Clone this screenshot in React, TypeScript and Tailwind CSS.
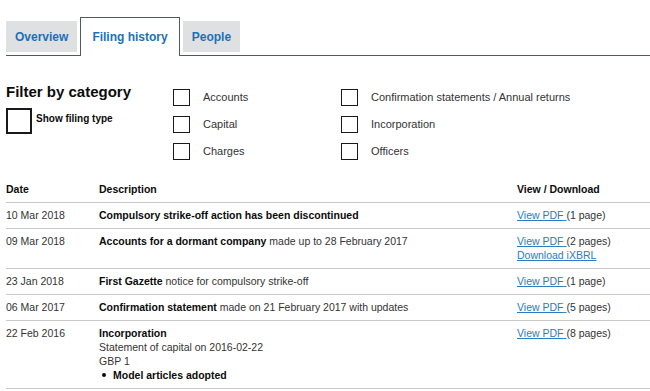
const tabs = [
  { label: 'Overview', active: false },
  { label: 'Filing history', active: true },
  { label: 'People', active: false },
];

const categoriesA = ['Accounts', 'Capital', 'Charges'];
const categoriesB = ['Confirmation statements / Annual returns', 'Incorporation', 'Officers'];

type Filing = {
  date: string;
  title: string;
  rest?: string;
  extra?: string[];
  bullet?: string;
  pages: string;
  ixbrl?: boolean;
};

const filings: Filing[] = [
  { date: '10 Mar 2018', title: 'Compulsory strike-off action has been discontinued', pages: '(1 page)' },
  {
    date: '09 Mar 2018',
    title: 'Accounts for a dormant company',
    rest: ' made up to 28 February 2017',
    pages: '(2 pages)',
    ixbrl: true,
  },
  { date: '23 Jan 2018', title: 'First Gazette', rest: ' notice for compulsory strike-off', pages: '(1 page)' },
  {
    date: '06 Mar 2017',
    title: 'Confirmation statement',
    rest: ' made on 21 February 2017 with updates',
    pages: '(5 pages)',
  },
  {
    date: '22 Feb 2016',
    title: 'Incorporation',
    extra: ['Statement of capital on 2016-02-22', 'GBP 1'],
    bullet: 'Model articles adopted',
    pages: '(8 pages)',
  },
];

function Checkbox({ label }: { label: string }) {
  return (
    <label className="flex items-center gap-[13px]">
      <span className="block h-[17px] w-[17px] shrink-0 border-[1.5px] border-[#1a1a1a] bg-white" />
      <span className="text-[11px] text-[#333]">{label}</span>
    </label>
  );
}

export default function App() {
  return (
    <div className="min-h-[391px] bg-white pl-[6px] pt-[17px] font-['Liberation_Sans',Arial,sans-serif] text-[#0b0c0c]">
      <ul className="flex items-end gap-[3px] border-b border-[#505a5f]">
        {tabs.map((t) =>
          t.active ? (
            <li
              key={t.label}
              className="-mb-px flex h-[39px] items-center border border-b-0 border-[#505a5f] bg-white px-[11px] text-[12px] font-bold text-[#1d70b8]"
            >
              {t.label}
            </li>
          ) : (
            <li
              key={t.label}
              className="mb-[3px] flex h-[31px] items-center bg-[#dee0e2] px-[9px] text-[12px] font-bold text-[#1d70b8]"
            >
              {t.label}
            </li>
          ),
        )}
      </ul>

      <div className="mt-[27px] flex">
        <div className="w-[167px]">
          <h2 className="text-[15px] font-bold leading-[18px]">Filter by category</h2>
          <label className="mt-[7px] flex items-start gap-[4px]">
            <span className="block h-[26px] w-[26px] shrink-0 border-2 border-[#1a1a1a]" />
            <span className="mt-[5px] text-[10px] font-bold leading-[12px]">Show filing type</span>
          </label>
        </div>
        <div className="mt-[6px] flex w-[168px] flex-col gap-[10px]">
          {categoriesA.map((c) => (
            <Checkbox key={c} label={c} />
          ))}
        </div>
        <div className="mt-[6px] flex flex-col gap-[10px]">
          {categoriesB.map((c) => (
            <Checkbox key={c} label={c} />
          ))}
        </div>
      </div>

      <table className="mt-[17px] w-full border-collapse text-left text-[10.5px] leading-[14px]">
        <thead>
          <tr className="border-b border-[#c8c8c8]">
            <th className="w-[93px] pb-[6px] pt-[5px] font-bold">Date</th>
            <th className="w-[418px] pb-[6px] pt-[5px] font-bold">Description</th>
            <th className="pb-[6px] pt-[5px] font-bold">View / Download</th>
          </tr>
        </thead>
        <tbody>
          {filings.map((f) => (
            <tr key={f.date} className="border-b border-[#c8c8c8] align-top">
              <td className="pb-[6px] pt-[5px] text-[#333]">{f.date}</td>
              <td className="pb-[6px] pt-[5px] text-[#333]">
                <strong className="font-bold text-[#0b0c0c]">{f.title}</strong>
                {f.rest}
                {f.extra?.map((line) => (
                  <div key={line}>{line}</div>
                ))}
                {f.bullet && (
                  <div className="flex items-center gap-[7px] pl-[3px] font-bold text-[#0b0c0c]">
                    <span className="block h-[4px] w-[4px] rounded-full bg-[#0b0c0c]" />
                    {f.bullet}
                  </div>
                )}
              </td>
              <td className="pb-[6px] pt-[5px] text-[#333]">
                <div>
                  <a href="#" className="text-[#2b7bc0] underline">
                    View PDF{' '}
                  </a>
                  {f.pages}
                </div>
                {f.ixbrl && (
                  <a href="#" className="text-[#2b7bc0] underline">
                    Download iXBRL
                  </a>
                )}
              </td>
            </tr>
          ))}
        </tbody>
      </table>
    </div>
  );
}
